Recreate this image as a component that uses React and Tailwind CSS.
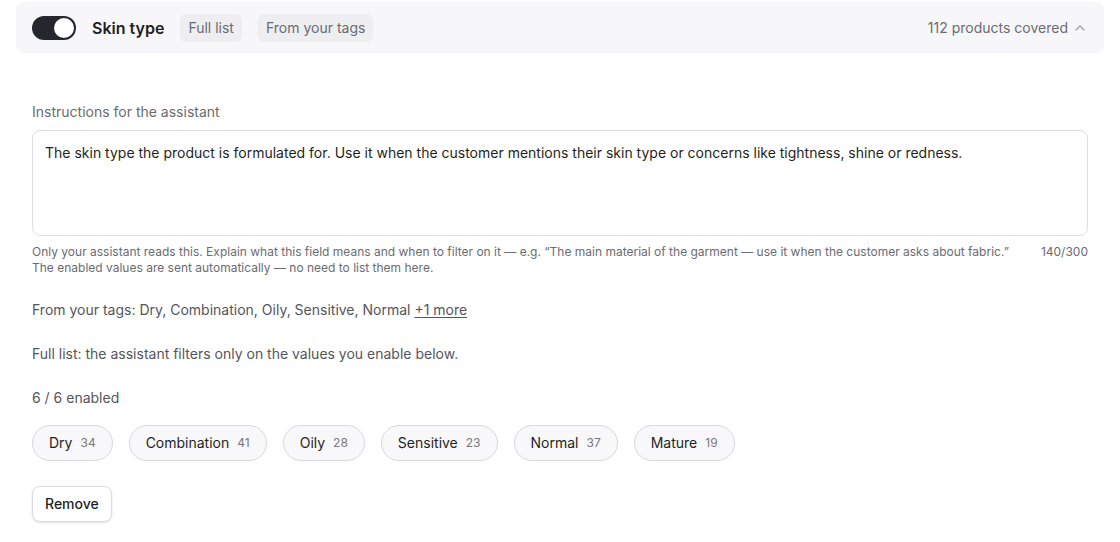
import { ChevronUp } from 'lucide-react';

const values = [
  { name: 'Dry', count: 34 },
  { name: 'Combination', count: 41 },
  { name: 'Oily', count: 28 },
  { name: 'Sensitive', count: 23 },
  { name: 'Normal', count: 37 },
  { name: 'Mature', count: 19 },
];

export default function App() {
  const text = 'The skin type the product is formulated for. Use it when the customer mentions their skin type or concerns like tightness, shine or redness.';

  return (
    <div className="min-h-screen bg-white px-4 pt-[2px] text-[#1f1f24]" style={{ fontFamily: 'Inter, "Noto Sans", sans-serif' }}>
      {/* header */}
      <div className="h-[51px] flex items-center justify-between rounded-lg bg-[#f7f7f9] px-4">
        <div className="flex items-center">
          <div className="w-11 h-6 rounded-full bg-[#26262e] flex items-center justify-end px-[2px]">
            <div className="w-5 h-5 rounded-full bg-white" />
          </div>
          <span className="ml-4 text-base font-semibold">Skin type</span>
          <span className="ml-4 h-7 flex items-center rounded-md bg-[#eeeef1] px-2 text-sm text-[#6b6b72]">Full list</span>
          <span className="ml-4 h-7 flex items-center rounded-md bg-[#eeeef1] px-2 text-sm text-[#6b6b72]">From your tags</span>
        </div>
        <div className="flex items-center gap-1 text-sm text-[#6b6b72]">
          112 products covered
          <ChevronUp className="w-4 h-4 text-[#9a9aa2]" strokeWidth={1.75} />
        </div>
      </div>

      {/* body */}
      <div className="px-4 pt-[49px]">
        <label className="block text-sm text-[#6b6b72] mb-2">Instructions for the assistant</label>
        <div className="h-[106px] rounded-lg border border-[#dedee2] p-3 text-sm leading-5">{text}</div>
        <div className="mt-2 flex justify-between gap-4 text-xs leading-4 text-[#6b6b72]">
          <div>
            <p>Only your assistant reads this. Explain what this field means and when to filter on it — e.g. “The main material of the garment — use it when the customer asks about fabric.”</p>
            <p>The enabled values are sent automatically — no need to list them here.</p>
          </div>
          <span className="shrink-0">140/300</span>
        </div>

        <p className="mt-6 text-sm text-[#55555c]">
          From your tags: Dry, Combination, Oily, Sensitive, Normal{' '}
          <span className="underline underline-offset-2">+1 more</span>
        </p>

        <p className="mt-6 text-sm text-[#55555c]">Full list: the assistant filters only on the values you enable below.</p>

        <p className="mt-6 text-sm text-[#55555c]">6 / 6 enabled</p>

        <div className="mt-[17px] flex flex-wrap gap-4">
          {values.map(v => (
            <button
              key={v.name}
              className="h-9 flex items-center gap-2 rounded-full border border-[#d8d8dd] bg-[#f8f8fa] px-4 text-sm">
              {v.name}
              <span className="text-xs text-[#77777e]">{v.count}</span>
            </button>
          ))}
        </div>

        <button className="mt-[25px] h-9 rounded-lg border border-[#dcdce0] bg-white px-3 text-sm font-medium shadow-sm">
          Remove
        </button>
      </div>
    </div>
  );
}
